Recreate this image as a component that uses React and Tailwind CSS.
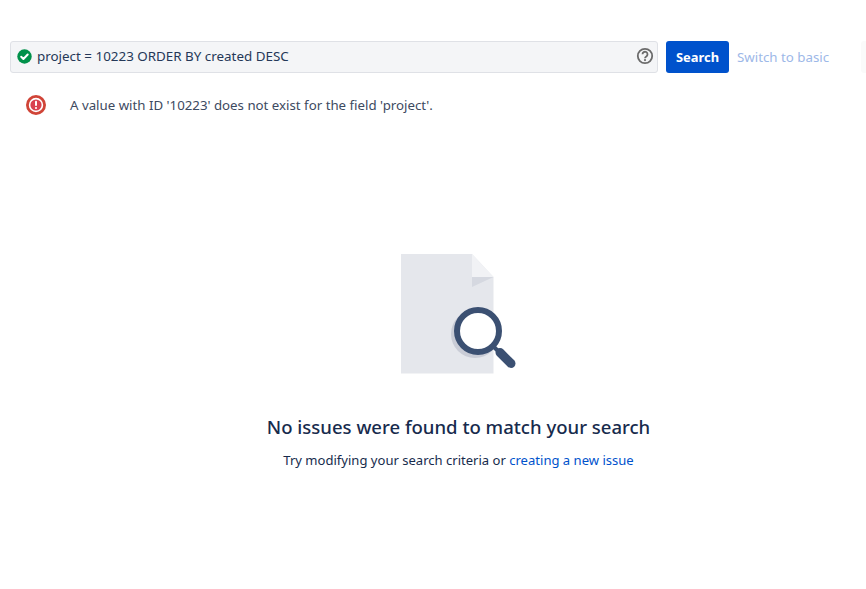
import React from "react";

function CheckIcon() {
  return (
    <svg width="15" height="15" viewBox="0 0 15 15" className="shrink-0">
      <circle cx="7.5" cy="7.5" r="7.2" fill="#00914a" />
      <path d="M4.2 7.8l2.2 2.2 4.3-4.5" fill="none" stroke="#fff" strokeWidth="2" strokeLinecap="round" strokeLinejoin="round" />
    </svg>
  );
}

function HelpIcon() {
  return (
    <svg width="18" height="18" viewBox="0 0 18 18" className="shrink-0">
      <circle cx="9" cy="9" r="7.2" fill="none" stroke="#6b6b6b" strokeWidth="1.8" />
      <path d="M6.5 7.3a2.5 2.5 0 1 1 3.8 2.1c-.9.6-1.3 1-1.3 1.8" fill="none" stroke="#6b6b6b" strokeWidth="1.8" />
      <circle cx="9" cy="13.1" r="1.1" fill="#6b6b6b" />
    </svg>
  );
}

function ErrorIcon() {
  return (
    <svg width="20" height="20" viewBox="0 0 20 20" className="shrink-0">
      <circle cx="10" cy="10" r="8.6" fill="#fff" stroke="#d04437" strokeWidth="2.8" />
      <circle cx="10" cy="10" r="5.6" fill="#d9414f" />
      <rect x="9" y="5.8" width="2" height="5.2" rx="0.9" fill="#fff" />
      <circle cx="10" cy="13" r="1.1" fill="#fff" />
    </svg>
  );
}

function EmptyArt() {
  return (
    <svg width="116" height="120" viewBox="0 0 116 120">
      <defs>
        <clipPath id="doc">
          <rect x="0" y="0" width="92.5" height="120" />
        </clipPath>
      </defs>
      <path d="M0 0H71L92.5 23V119.5H0Z" fill="#e5e7ec" />
      <path d="M71 0L92.5 23H71Z" fill="#f1f2f5" />
      <path d="M71 23H92.5L71 33Z" fill="#d5d8e0" />
      <circle cx="74" cy="80" r="24" fill="#c9ccd6" clipPath="url(#doc)" />
      <circle cx="77" cy="77" r="21" fill="#fff" stroke="#3b5072" strokeWidth="6" />
      <path d="M92 92L98 98" stroke="#3b5072" strokeWidth="4" />
      <path d="M99 98.5L110 109.5" stroke="#3b5072" strokeWidth="9" strokeLinecap="round" />
    </svg>
  );
}

export default function App() {
  return (
    <div className="w-[866px] h-[589px] bg-white overflow-hidden text-[14px] text-[#42526e] font-['Noto_Sans','Open_Sans',sans-serif]">
      <div className="pt-[41px] pl-[10px] flex items-start">
        <div className="w-[648px] h-[32px] bg-[#f4f5f7] border border-[#dfe1e6] rounded-[3px] flex items-center pl-[6px] pr-[3px] gap-[5px] pb-[2px]">
          <CheckIcon />
          <span className="flex-1 text-[#253858] text-[13.4px]">project = 10223 ORDER BY created DESC</span>
          <HelpIcon />
        </div>
        <button className="ml-[8px] w-[63px] h-[32px] bg-[#0052cc] rounded-[3px] text-white font-bold text-[12.9px] pt-[1px]">Search</button>
        <span className="ml-[8px] h-[32px] flex items-center text-[#9db8e8] text-[13.3px] pt-[1px]">Switch to basic</span>
        <div className="ml-auto w-[5px] h-[32px] bg-[#fafafa] rounded-l-[3px]"></div>
      </div>
      <div className="mt-[10px] pl-[26px] h-[44px] flex items-center">
        <ErrorIcon />
        <span className="ml-[24px] pt-[1px] text-[13.28px] text-[#3d4a5f]">A value with ID '10223' does not exist for the field 'project'.</span>
      </div>
      <div className="mt-[127px] pl-[401px]">
        <EmptyArt />
      </div>
      <div className="mt-[39px] flex flex-col items-center pl-[51px]">
        <h1 className="text-[18.55px] font-medium text-[#172b4d] leading-[28px]">No issues were found to match your search</h1>
        <p className="mt-[10px] text-[13.05px] text-[#172b4d]">
          Try modifying your search criteria or <a className="text-[#0052cc]">creating a new issue</a>
        </p>
      </div>
    </div>
  );
}
